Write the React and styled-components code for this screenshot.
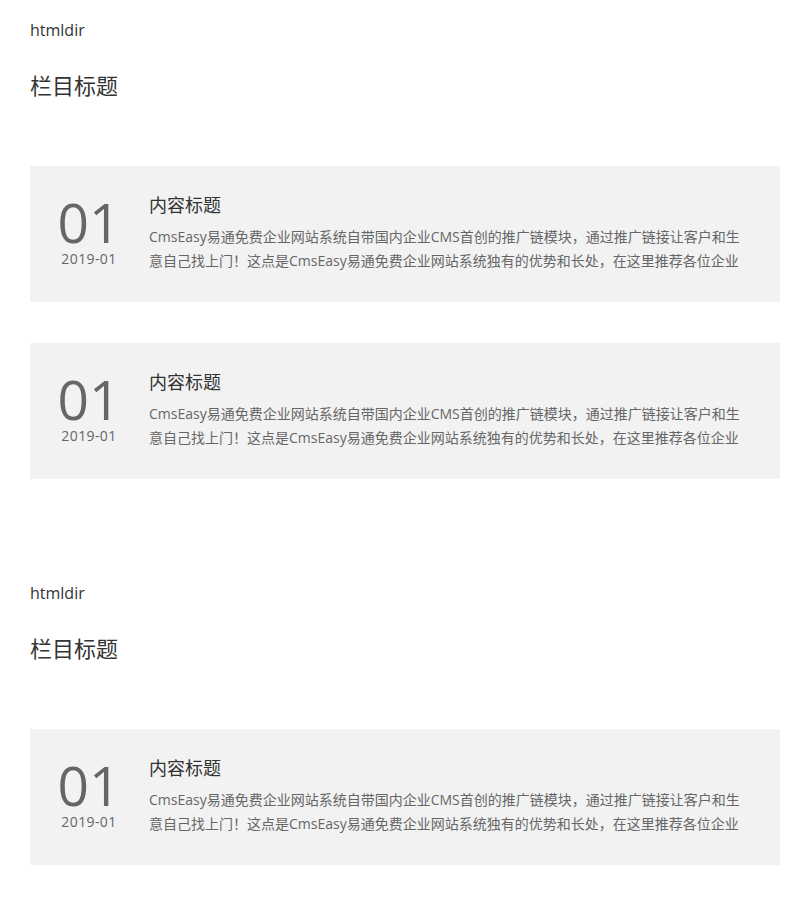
import React from "react";
import styled, { createGlobalStyle } from "styled-components";

const GlobalStyle = createGlobalStyle`
  body {
    margin: 0;
    background: #fff;
    font-family: "Open Sans", "Noto Sans CJK SC", sans-serif;
    color: #333;
  }
`;

const Page = styled.div`
  padding: 0 28px 0 30px;
`;

const Section = styled.section`
  padding-top: 20px;
  margin-bottom: 84px;
`;

const DirLabel = styled.div`
  font-size: 16px;
  line-height: 20px;
  color: #333;
`;

const Heading = styled.h2`
  margin: 30px 0 0;
  font-size: 22px;
  font-weight: normal;
  line-height: 30px;
  color: #333;
`;

const List = styled.div`
  margin-top: 66px;
  display: flex;
  flex-direction: column;
  gap: 41px;
`;

const Card = styled.div`
  display: flex;
  align-items: flex-start;
  gap: 31px;
  height: 136px;
  box-sizing: border-box;
  padding: 26px 40px 0 30px;
  background: #f2f2f2;
`;

const DateBox = styled.div`
  width: 58px;
  display: flex;
  flex-direction: column;
  align-items: center;
  color: #666;
  padding-top: 6px;
`;

const Num = styled.div`
  font-size: 55px;
  line-height: 48px;
  font-weight: 400;
`;

const Month = styled.div`
  font-size: 14px;
  line-height: 18px;
  letter-spacing: 0.4px;
  margin-top: 4px;
`;

const Body = styled.div`
  flex: 1;
  min-width: 0;
`;

const Title = styled.div`
  font-size: 18px;
  line-height: 26px;
  color: #333;
`;

const Desc = styled.p`
  margin: 7px 0 0;
  font-size: 14px;
  line-height: 24px;
  color: #666;
  height: 48px;
  overflow: hidden;
`;

const desc =
  "CmsEasy易通免费企业网站系统自带国内企业CMS首创的推广链模块，通过推广链接让客户和生意自己找上门！这点是CmsEasy易通免费企业网站系统独有的优势和长处，在这里推荐各位企业";

const sections = [2, 1];

const Item = () => (
  <Card>
    <DateBox>
      <Num>01</Num>
      <Month>2019-01</Month>
    </DateBox>
    <Body>
      <Title>内容标题</Title>
      <Desc>{desc}</Desc>
    </Body>
  </Card>
);

export default function App() {
  return (
    <>
      <GlobalStyle />
      <Page>
        {sections.map((count, i) => (
          <Section key={i}>
            <DirLabel>htmldir</DirLabel>
            <Heading>栏目标题</Heading>
            <List>
              {Array.from({ length: count }).map((_, j) => (
                <Item key={j} />
              ))}
            </List>
          </Section>
        ))}
      </Page>
    </>
  );
}
